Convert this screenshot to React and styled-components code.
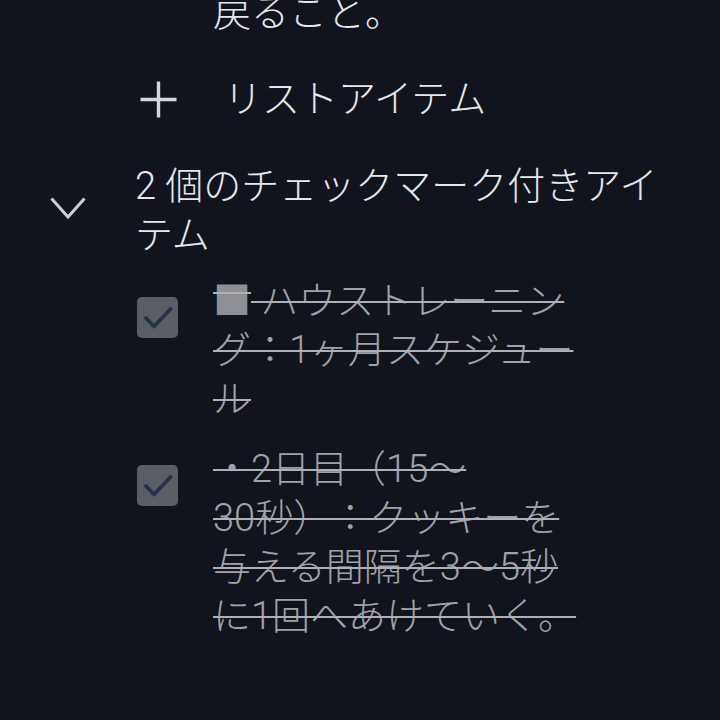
import React from "react";
import styled, { createGlobalStyle } from "styled-components";

const Global = createGlobalStyle`
  html, body {
    margin: 0;
    padding: 0;
    background: #11141c;
  }
  body {
    width: 720px;
    height: 720px;
    overflow: hidden;
    font-family: Roboto, "Noto Sans CJK JP", sans-serif;
  }
`;

const Page = styled.div`
  width: 720px;
  height: 720px;
  overflow: hidden;
  background: #11141c;
`;

const List = styled.div`
  display: flex;
  flex-direction: column;
  margin-top: -11px;
`;

const Text = styled.div`
  font-size: 38px;
  font-weight: 300;
  line-height: 49px;
  white-space: nowrap;
  text-spacing-trim: space-all;
  color: ${(p) => (p.$checked ? "#a0a2a8" : "#e6e7ec")};
  text-decoration: ${(p) => (p.$checked ? "line-through" : "none")};
  text-decoration-thickness: 2px;
  text-decoration-color: #aeb0b6;
`;

const Square = styled.span`
  font-family: "Noto Sans CJK JP", sans-serif;
  line-height: 0;
  color: #8d8f95;
`;

const ItemRow = styled.div`
  display: flex;
  align-items: flex-start;
  gap: 35px;
  padding-left: 137px;
  margin-top: ${(p) => p.$mt || 0}px;
`;

const Check = styled.div`
  flex: none;
  width: 41px;
  height: 41px;
  margin-top: ${(p) => (p.$hidden ? 0 : 20)}px;
  border-radius: 5px;
  background: ${(p) => (p.$hidden ? "transparent" : "#5c5e65")};
  display: flex;
  align-items: center;
  justify-content: center;
`;

const AddRow = styled.div`
  display: flex;
  align-items: center;
  gap: 47px;
  padding-left: 140px;
  margin-top: 37px;
`;

const HeaderRow = styled.div`
  display: flex;
  align-items: center;
  gap: 49px;
  padding-left: 50px;
  margin-top: 38px;
`;

const IconBox = styled.div`
  flex: none;
  display: flex;
  width: ${(p) => p.$w}px;
  height: ${(p) => p.$h}px;
  margin-top: ${(p) => p.$mt || 0}px;
`;

const CheckMark = () => (
  <svg width="41" height="41" viewBox="0 0 41 41">
    <path
      d="M9 21 L17 29.5 L33.5 12"
      fill="none"
      stroke="#29324d"
      strokeWidth="4"
      strokeLinecap="round"
      strokeLinejoin="round"
    />
  </svg>
);

const PlusIcon = () => (
  <svg width="37" height="37" viewBox="0 0 37 37">
    <path d="M18.5 0.5 V36.5 M0.5 18.5 H36.5" stroke="#d6d7dc" strokeWidth="3.4" fill="none" />
  </svg>
);

const ChevronIcon = () => (
  <svg width="36" height="22" viewBox="0 0 36 22">
    <path
      d="M1.5 1.5 L18 20 L34.5 1.5"
      stroke="#cfd0d5"
      strokeWidth="3"
      fill="none"
    />
  </svg>
);

const Lines = ({ lines }) =>
  lines.map((l, i) => (
    <React.Fragment key={i}>
      {i > 0 && <br />}
      {l}
    </React.Fragment>
  ));

export default function App() {
  return (
    <Page>
      <Global />
      <List>
        <ItemRow>
          <Check $hidden />
          <Text>戻ること。</Text>
        </ItemRow>
        <AddRow>
          <IconBox $w={37} $h={37}>
            <PlusIcon />
          </IconBox>
          <Text>リストアイテム</Text>
        </AddRow>
        <HeaderRow>
          <IconBox $w={36} $h={22} $mt={-7}>
            <ChevronIcon />
          </IconBox>
          <Text>
            <Lines lines={["2 個のチェックマーク付きアイ", "テム"]} />
          </Text>
        </HeaderRow>
        <ItemRow $mt={17}>
          <Check>
            <CheckMark />
          </Check>
          <Text $checked>
            <Square>■</Square>
            {" ハウストレーニン"}
            <br />
            グ：1ヶ月スケジュー
            <br />
            ル
          </Text>
        </ItemRow>
        <ItemRow $mt={21}>
          <Check>
            <CheckMark />
          </Check>
          <Text $checked>
            <Lines lines={["・2日目（15～", "30秒）：クッキーを", "与える間隔を3〜5秒", "に1回へあけていく。"]} />
          </Text>
        </ItemRow>
      </List>
    </Page>
  );
}
